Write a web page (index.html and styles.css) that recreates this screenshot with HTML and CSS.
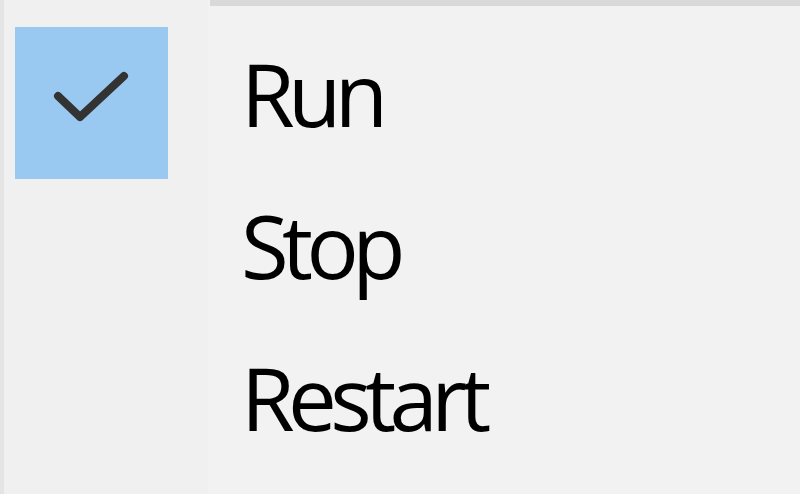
FILE: index.html
```html
<!DOCTYPE html>
<html>
<head>
<meta charset="utf-8">
<link rel="stylesheet" href="styles.css">
</head>
<body>
<div class="menu">
  <div class="gutter-top"></div>
  <div class="sep-cell"><div class="sep"></div></div>

  <div class="icon-cell"><div class="check-box"><svg class="check" viewBox="0 0 153 152" width="153" height="152"><path d="M43 69 L65 90 L109 49" fill="none" stroke="#333" stroke-width="8" stroke-linecap="round" stroke-linejoin="round"/></svg></div></div>
  <div class="label">Run</div>

  <div class="icon-cell"></div>
  <div class="label">Stop</div>

  <div class="icon-cell"></div>
  <div class="label">Restart</div>

  <div class="icon-cell fill"></div>
  <div class="label fill"></div>
</div>
</body>
</html>
```
FILE: styles.css
```css
html, body {
  margin: 0;
  padding: 0;
  background: #f2f2f2;
  overflow: hidden;
}
.menu {
  display: grid;
  grid-template-columns: 208px 1fr;
  grid-template-rows: 27px 152px 152px 152px 11px;
  width: 800px;
  height: 494px;
  background: #f2f2f2;
  font-family: "Open Sans", "Noto Sans", sans-serif;
  color: #000;
}
.gutter-top, .icon-cell {
  background: #f0f0f0;
  border-left: 4px solid #e4e4e4;
  box-sizing: border-box;
}
.sep-cell {
  padding-left: 2px;
}
.sep {
  height: 6px;
  background: #d9d9d9;
}
.icon-cell {
  display: flex;
  align-items: center;
  padding-left: 11px;
}
.check-box {
  width: 153px;
  height: 152px;
  background: #99c9f0;
}
.check {
  display: block;
}
.label {
  display: flex;
  align-items: center;
  padding-left: 33px;
  font-size: 87px;
  letter-spacing: -6.6px;
  line-height: 1;
  padding-bottom: 20px;
  box-sizing: border-box;
}
```
